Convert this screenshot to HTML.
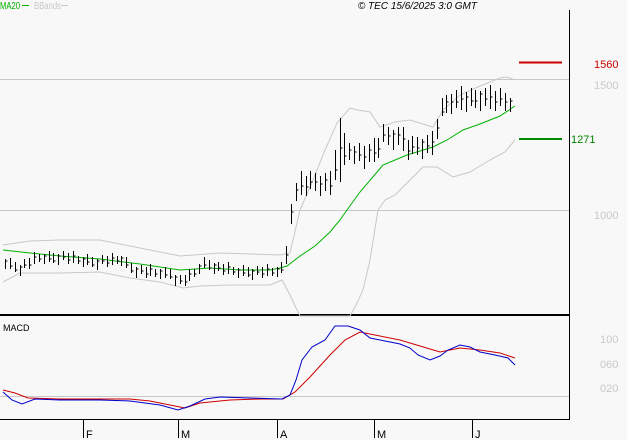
<!DOCTYPE html>
<html><head><meta charset="utf-8"><style>
html,body{margin:0;padding:0;background:#f8f8f8;}
svg{display:block;font-family:"Liberation Sans",sans-serif;}
</style></head><body>
<svg width="627" height="440" viewBox="0 0 627 440" xmlns="http://www.w3.org/2000/svg">
<rect width="627" height="440" fill="#f8f8f8"/>
<line x1="0" y1="79.5" x2="569" y2="79.5" stroke="#c8c8c8"/>
<line x1="0" y1="210.5" x2="569" y2="210.5" stroke="#c8c8c8"/>
<line x1="0" y1="396.5" x2="569" y2="396.5" stroke="#c8c8c8"/>
<line x1="569.5" y1="10" x2="569.5" y2="420" stroke="#000"/>
<line x1="0" y1="315" x2="570" y2="315" stroke="#000" stroke-width="2"/>
<line x1="0" y1="419.5" x2="570" y2="419.5" stroke="#000"/>
<g stroke="#000"><line x1="83.5" y1="419" x2="83.5" y2="438"/><line x1="178.5" y1="419" x2="178.5" y2="438"/><line x1="277.5" y1="419" x2="277.5" y2="438"/><line x1="374.5" y1="419" x2="374.5" y2="438"/><line x1="472.5" y1="419" x2="472.5" y2="438"/></g>
<g font-size="11" fill="#000"><text x="86" y="438">F</text><text x="181" y="438">M</text><text x="280" y="438">A</text><text x="377" y="438">M</text><text x="475" y="438">J</text></g>
<text x="0" y="9" font-size="10" fill="#00b000" textLength="20" lengthAdjust="spacingAndGlyphs">MA20</text><line x1="22" y1="5.5" x2="29" y2="5.5" stroke="#00b000"/>
<text x="34" y="9" font-size="10" fill="#c8c8c8" textLength="27" lengthAdjust="spacingAndGlyphs">BBands</text><line x1="61" y1="5.5" x2="68" y2="5.5" stroke="#c8c8c8"/>
<text x="477" y="9" font-size="10" font-style="italic" fill="#000" text-anchor="end">© TEC 15/6/2025 3:0 GMT</text>
<line x1="519" y1="62.5" x2="562" y2="62.5" stroke="#cc0000" stroke-width="2"/>
<text x="594" y="68" font-size="11" fill="#cc0000">1560</text>
<text x="594" y="89" font-size="11" fill="#c8c8c8">1500</text>
<line x1="519" y1="139" x2="562" y2="139" stroke="#008800" stroke-width="2"/>
<text x="571" y="143" font-size="11" fill="#008800">1271</text>
<text x="594" y="219" font-size="11" fill="#c8c8c8">1000</text>
<text x="600" y="343" font-size="11" fill="#c8c8c8">100</text>
<text x="600" y="368" font-size="11" fill="#c8c8c8">060</text>
<text x="600" y="392" font-size="11" fill="#c8c8c8">020</text>
<text x="3" y="331" font-size="9" fill="#000">MACD</text>
<polyline fill="none" stroke="#c8c8c8" points="3,245 30,241 60,240 100,240 140,248 180,256 220,253 280,255 290,253 300,210 313,180 325,150 337,123 350,108 358,110 370,112 380,127 395,122 410,120 433,127 443,110 460,95 480,86 500,78 507,77 515,80"/>
<polyline fill="none" stroke="#c8c8c8" points="3,282 20,273 60,273 100,272 130,278 160,282 183,288 200,286 230,285 270,285 282,280 290,295 297,310 300,316 350,316 356,305 363,290 370,260 378,210 385,200 395,195 410,180 423,167 437,167 453,177 470,172 490,160 505,152 515,140"/>
<polyline fill="none" stroke="#00b000" points="3,250 30,253 60,256 100,259 140,264 180,270 210,268 240,270 270,270 280,268 287,266 300,256 315,246 330,232 340,220 347,210 360,192 383,165 407,155 433,147 447,140 463,130 480,124 500,116 515,106"/>
<path fill="none" stroke="#000" d="M5.5 259V269M5.5 261h2M10.5 258V269M10.5 266h2M15.5 262V272M15.5 270h2M20.5 265V276M20.5 267h2M24.5 259V268M24.5 265h2M29.5 258V269M29.5 265h2M34.5 252V264M34.5 257h2M39.5 254V262M39.5 259h2M44.5 254V264M44.5 256h2M49.5 251V262M49.5 259h2M53.5 253V263M53.5 261h2M58.5 254V265M58.5 256h2M63.5 251V260M63.5 257h2M68.5 253V264M68.5 260h2M73.5 251V263M73.5 256h2M78.5 256V264M78.5 261h2M83.5 257V267M83.5 259h2M87.5 254V265M87.5 262h2M92.5 257V267M92.5 265h2M97.5 259V270M97.5 261h2M102.5 255V264M102.5 261h2M107.5 256V267M107.5 263h2M112.5 253V265M112.5 258h2M117.5 256V264M117.5 261h2M121.5 256V266M121.5 258h2M126.5 257V268M126.5 265h2M131.5 263V273M131.5 271h2M136.5 267V278M136.5 269h2M141.5 265V274M141.5 271h2M146.5 267V278M146.5 274h2M150.5 264V276M150.5 269h2M155.5 269V277M155.5 274h2M160.5 269V279M160.5 271h2M165.5 267V278M165.5 275h2M170.5 269V279M170.5 277h2M175.5 275V286M175.5 277h2M180.5 275V284M180.5 281h2M185.5 275V286M185.5 282h2M189.5 269V281M189.5 274h2M194.5 269V277M194.5 274h2M199.5 264V274M199.5 266h2M204.5 257V268M204.5 265h2M209.5 260V270M209.5 268h2M214.5 263V274M214.5 265h2M218.5 262V271M218.5 268h2M223.5 264V275M223.5 271h2M228.5 262V274M228.5 267h2M233.5 267V275M233.5 272h2M238.5 268V278M238.5 270h2M243.5 265V276M243.5 273h2M248.5 267V277M248.5 275h2M252.5 269V280M252.5 271h2M257.5 266V275M257.5 272h2M262.5 267V278M262.5 274h2M267.5 264V276M267.5 269h2M272.5 268V276M272.5 273h2M277.5 267V277M277.5 269h2M281.5 262V273M281.5 270h2M286.5 246V264M286.5 255h2M291.5 204V224M291.5 212h2M296.5 183V201M296.5 190h2M301.5 171V195M301.5 186h2M306.5 176V196M306.5 187h2M310.5 171V189M310.5 182h2M315.5 173V191M315.5 182h2M320.5 176V196M320.5 184h2M325.5 173V191M325.5 180h2M330.5 171V195M330.5 186h2M335.5 150V180M335.5 170h2M340.5 118V182M340.5 148h2M344.5 133V165M344.5 156h2M349.5 143V160M349.5 150h2M354.5 146V164M354.5 152h2M359.5 143V161M359.5 155h2M364.5 146V169M364.5 157h2M369.5 144V162M369.5 150h2M374.5 138V162M374.5 153h2M378.5 138V158M378.5 149h2M383.5 124V142M383.5 135h2M388.5 127V145M388.5 136h2M393.5 130V150M393.5 134h2M398.5 127V145M398.5 135h2M403.5 127V151M403.5 139h2M408.5 140V160M408.5 151h2M412.5 136V154M412.5 147h2M417.5 137V155M417.5 148h2M422.5 139V159M422.5 142h2M427.5 135V153M427.5 146h2M432.5 131V155M432.5 142h2M437.5 119V139M437.5 128h2M442.5 98V116M442.5 112h2M446.5 95V113M446.5 102h2M451.5 94V114M451.5 102h2M456.5 90V108M456.5 102h2M461.5 86V110M461.5 99h2M466.5 92V112M466.5 97h2M471.5 88V106M471.5 101h2M475.5 90V108M475.5 101h2M480.5 91V111M480.5 94h2M485.5 88V106M485.5 99h2M490.5 85V109M490.5 97h2M495.5 91V111M495.5 102h2M500.5 88V106M500.5 99h2M505.5 93V111M505.5 102h2M510.5 98V112M510.5 101h2"/>
<polyline fill="none" stroke="#cc0000" points="3,390 15,393 28,398 60,399 130,399 150,401 170,405 185,408 200,403 230,400 260,399 283,399 295,392 310,377 330,355 345,340 360,332 380,336 400,340 420,346 440,352 460,348 480,350 500,353 515,358"/>
<polyline fill="none" stroke="#0000cc" points="3,392 12,400 22,404 35,399 60,400 100,400 130,401 160,405 178,410 190,406 205,399 220,397 250,398 282,399 290,395 296,380 302,360 312,347 325,340 335,326 348,326 360,330 370,338 385,341 400,344 410,348 418,355 430,360 440,356 448,350 460,345 470,347 480,352 495,355 508,358 515,365"/>
</svg>
</body></html>
